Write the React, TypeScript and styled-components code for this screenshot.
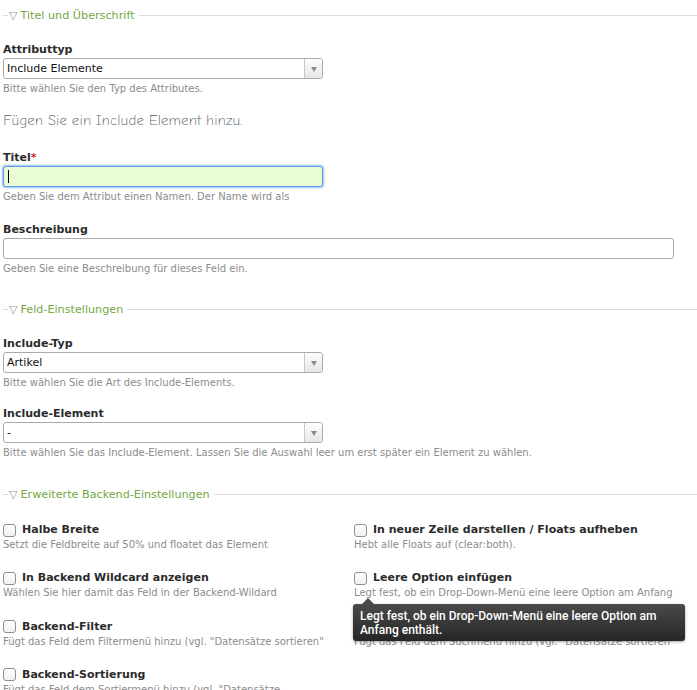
import React from "react";
import styled, { createGlobalStyle } from "styled-components";

const Global = createGlobalStyle`
  html, body { margin: 0; padding: 0; background: #fff; }
  body { font-family: "DejaVu Sans", Verdana, sans-serif; overflow: hidden; }
`;

const Page = styled.div`
  position: relative;
  width: 697px;
  height: 690px;
  overflow: hidden;
  padding: 6px 0 0 3px;
  box-sizing: border-box;
`;

const LegendRow = styled.div<{ $mt?: number }>`
  display: flex;
  align-items: center;
  height: 18px;
  margin-top: ${(p) => p.$mt ?? 0}px;
  margin-right: -3px;
`;

const LegendLine = styled.span<{ $grow?: boolean }>`
  height: 1px;
  background: #dcdcdc;
  flex: ${(p) => (p.$grow ? "1 1 auto" : "0 0 5px")};
`;

const LegendText = styled.span`
  display: flex;
  align-items: center;
  color: #74a744;
  font-size: 11.2px;
  padding: 0 4px 0 1px;
  white-space: nowrap;
`;

const Tri = styled.span`
  color: #9a9a9a;
  font-size: 11px;
  margin-right: 3px;
`;

const Widget = styled.div<{ $mt: number }>`
  margin-top: ${(p) => p.$mt}px;
`;

const Label = styled.div`
  font-size: 11px;
  font-weight: bold;
  color: #2b2b2b;
  line-height: 14px;
  height: 14px;
  padding-top: 1px;
  margin-bottom: 1px;
`;

const Req = styled.span`
  color: #c33;
`;

const SelectBox = styled.div`
  display: flex;
  width: 320px;
  height: 21px;
  box-sizing: border-box;
  border: 1px solid #aaa;
  border-radius: 3px;
  background: #fff;
  overflow: hidden;
`;

const SelectValue = styled.div`
  flex: 1;
  font-size: 11px;
  color: #111;
  line-height: 19px;
  padding-left: 3px;
`;

const SelectArrow = styled.div`
  width: 17px;
  border-left: 1px solid #c8c8c8;
  background: linear-gradient(#fdfdfd, #e6e6e6);
  display: flex;
  align-items: center;
  justify-content: center;
  &::after {
    content: "";
    border-left: 3.5px solid transparent;
    border-right: 3.5px solid transparent;
    border-top: 5px solid #8a8a8a;
    margin-top: 1px;
  }
`;

const TextInput = styled.div<{ $w: number; $focus?: boolean }>`
  width: ${(p) => p.$w}px;
  height: 21px;
  box-sizing: border-box;
  border: 1px solid ${(p) => (p.$focus ? "#5d9be8" : "#aaa")};
  border-radius: 3px;
  background: ${(p) => (p.$focus ? "#e9fcd6" : "#fff")};
  box-shadow: ${(p) => (p.$focus ? "0 0 2px 1px #93c1f7" : "none")};
  display: flex;
  align-items: center;
  padding-left: 4px;
`;

const Caret = styled.span`
  width: 1px;
  height: 13px;
  background: #000;
`;

const Help = styled.div`
  font-size: 10px;
  color: #8c8c8c;
  line-height: 14px;
  height: 14px;
  overflow: hidden;
  white-space: nowrap;
  margin-top: 3px;
`;

const Hand = styled.div`
  margin-top: 16px;
  font-family: "Comic Neue", "Comic Sans MS", "DejaVu Sans", sans-serif;
  font-size: 14.5px;
  line-height: 18px;
  color: #56606a;
  font-weight: 200;
  letter-spacing: 0.1px;
`;

const CheckGrid = styled.div`
  margin-top: 20px;
  display: grid;
  grid-template-columns: 351px 1fr;
  row-gap: 19.3px;
`;

const CheckItem = styled.div`
  height: 29px;
`;

const CheckHead = styled.div`
  display: flex;
  align-items: center;
  height: 14px;
`;

const Box = styled.span`
  width: 11px;
  height: 11px;
  border: 1px solid #8f8f8f;
  border-radius: 3px;
  background: linear-gradient(#fff, #f1f1f1);
  margin: 0 6px 0 0;
  flex: none;
`;

const CheckLabel = styled.span`
  font-size: 11px;
  font-weight: bold;
  color: #2b2b2b;
  line-height: 14px;
`;

const CheckHelp = styled(Help)`
  margin-top: 1px;
`;

const Tooltip = styled.div`
  position: absolute;
  left: 353px;
  top: 604px;
  width: 332px;
  box-sizing: border-box;
  padding: 5px 6px 4px 7px;
  border-radius: 3px;
  background: linear-gradient(#4a4a4a, #262626);
  box-shadow: 0 1px 3px rgba(0, 0, 0, 0.35);
  color: #fff;
  font-family: Roboto, "Liberation Sans", sans-serif;
  font-size: 12px;
  line-height: 14px;
  font-weight: 500;
  &::before {
    content: "";
    position: absolute;
    left: 9px;
    top: -6px;
    border-left: 6px solid transparent;
    border-right: 6px solid transparent;
    border-bottom: 6px solid #4a4a4a;
  }
`;

function Legend({ title, mt }: { title: string; mt?: number }) {
  return (
    <LegendRow $mt={mt}>
      <LegendLine />
      <LegendText>
        <Tri>▽</Tri>
        {title}
      </LegendText>
      <LegendLine $grow />
    </LegendRow>
  );
}

function Select({ value }: { value: string }) {
  return (
    <SelectBox>
      <SelectValue>{value}</SelectValue>
      <SelectArrow />
    </SelectBox>
  );
}

const checks: [string, string][] = [
  ["Halbe Breite", "Setzt die Feldbreite auf 50% und floatet das Element"],
  ["In neuer Zeile darstellen / Floats aufheben", "Hebt alle Floats auf (clear:both)."],
  ["In Backend Wildcard anzeigen", "Wählen Sie hier damit das Feld in der Backend-Wildard"],
  ["Leere Option einfügen", "Legt fest, ob ein Drop-Down-Menü eine leere Option am Anfang"],
  ["Backend-Filter", 'Fügt das Feld dem Filtermenü hinzu (vgl. "Datensätze sortieren"'],
  ["Backend-Suche", 'Fügt das Feld dem Suchmenü hinzu (vgl. "Datensätze sortieren"'],
  ["Backend-Sortierung", 'Fügt das Feld dem Sortiermenü hinzu (vgl. "Datensätze'],
];

export default function App() {
  return (
    <>
      <Global />
      <Page>
        <Legend title="Titel und Überschrift" />
        <Widget $mt={18}>
          <Label>Attributtyp</Label>
          <Select value="Include Elemente" />
          <Help>Bitte wählen Sie den Typ des Attributes.</Help>
        </Widget>
        <Hand>Fügen Sie ein Include Element hinzu.</Hand>
        <Widget $mt={20}>
          <Label>
            Titel<Req>*</Req>
          </Label>
          <TextInput $w={320} $focus>
            <Caret />
          </TextInput>
          <Help>Geben Sie dem Attribut einen Namen. Der Name wird als</Help>
        </Widget>
        <Widget $mt={18}>
          <Label>Beschreibung</Label>
          <TextInput $w={671} />
          <Help>Geben Sie eine Beschreibung für dieses Feld ein.</Help>
        </Widget>

        <Legend title="Feld-Einstellungen" mt={24} />
        <Widget $mt={18}>
          <Label>Include-Typ</Label>
          <Select value="Artikel" />
          <Help>Bitte wählen Sie die Art des Include-Elements.</Help>
        </Widget>
        <Widget $mt={16}>
          <Label>Include-Element</Label>
          <Select value="-" />
          <Help>
            Bitte wählen Sie das Include-Element. Lassen Sie die Auswahl leer um erst später ein Element zu wählen.
          </Help>
        </Widget>

        <Legend title="Erweiterte Backend-Einstellungen" mt={25} />
        <CheckGrid>
          {checks.map(([label, help]) => (
            <CheckItem key={label}>
              <CheckHead>
                <Box />
                <CheckLabel>{label}</CheckLabel>
              </CheckHead>
              <CheckHelp>{help}</CheckHelp>
            </CheckItem>
          ))}
        </CheckGrid>

        <Tooltip>Legt fest, ob ein Drop-Down-Menü eine leere Option am Anfang enthält.</Tooltip>
      </Page>
    </>
  );
}
